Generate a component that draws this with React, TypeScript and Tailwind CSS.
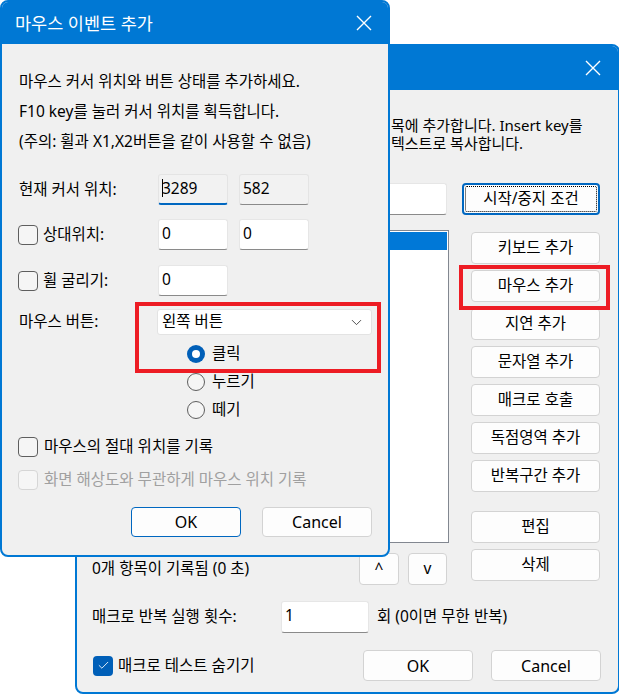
import { Check, ChevronDown } from 'lucide-react';
import clsx from 'clsx';

function CloseIcon() {
  return (
    <svg width="16" height="16" viewBox="0 0 16 16" fill="none">
      <path d="M1 1L15 15M15 1L1 15" stroke="white" strokeWidth="1.4" />
    </svg>
  );
}

function Btn({
  children,
  className,
  primary,
  focused,
}: {
  children: React.ReactNode;
  className?: string;
  primary?: boolean;
  focused?: boolean;
}) {
  return (
    <div
      className={clsx(
        'relative flex shrink-0 items-center justify-center rounded-[4px] bg-[#fdfdfd] text-[15.5px] text-black',
        focused ? 'border-2 border-[#0067c0]' : primary ? 'border border-[#0067c0]' : 'border border-[#d3d3d3]',
        className
      )}
    >
      {focused && <div className="absolute inset-[1px] rounded-[2px] border border-dotted border-black" />}
      {children}
    </div>
  );
}

function Box({ checked, disabled }: { checked?: boolean; disabled?: boolean }) {
  if (checked)
    return (
      <span className="flex h-[20px] w-[20px] shrink-0 items-center justify-center rounded-[4px] bg-[#005fb8]">
        <Check size={13} strokeWidth={1.6} color="white" />
      </span>
    );
  return (
    <span
      className={clsx(
        'h-[20px] w-[20px] shrink-0 rounded-[4px] border',
        disabled ? 'border-[#d6d6d6] bg-[#f6f6f6]' : 'border-[#5e5e5e] bg-[#f5f5f5]'
      )}
    />
  );
}

function Radio({ checked }: { checked?: boolean }) {
  if (checked)
    return (
      <span className="flex h-[18px] w-[18px] shrink-0 items-center justify-center rounded-full bg-[#005fb8]">
        <span className="h-[8px] w-[8px] rounded-full bg-white" />
      </span>
    );
  return <span className="h-[18px] w-[18px] shrink-0 rounded-full border border-[#5e5e5e] bg-[#f5f5f5]" />;
}

function Field({
  value,
  className,
  readOnly,
  focused,
}: {
  value: string;
  className?: string;
  readOnly?: boolean;
  focused?: boolean;
}) {
  return (
    <div
      className={clsx(
        'flex h-full shrink-0 items-start rounded-[3px] border px-[3px] pt-[3px] text-[15.5px] leading-[20px] text-black',
        readOnly ? 'border-[#e4e4e4] bg-[#f2f2f2]' : 'border-[#e6e6e6] bg-white',
        focused ? 'border-b-2 border-b-[#0067c0]' : 'border-b-[#8a8a8a]',
        className
      )}
    >
      {focused && <span className="mt-[1px] mr-[-1px] h-[18px] w-px bg-black" />}
      {value}
    </div>
  );
}

const sideButtons = ['키보드 추가', '마우스 추가', '지연 추가', '문자열 추가', '매크로 호출', '독점영역 추가', '반복구간 추가'];

function MacroWindow() {
  return (
    <div className="absolute left-[75px] top-[44px] flex h-[650px] w-[545px] flex-col overflow-hidden rounded-[8px] border-2 border-[#0078d4] bg-[#f0f0f0]">
      <div className="flex h-[44px] shrink-0 items-center justify-end bg-[#0078d4] pr-[17px]">
        <CloseIcon />
      </div>
      <div className="flex flex-col pl-[15px] pr-[17px]">
        <div className="pt-[26px] pl-[299px] text-[15px] leading-[18px] whitespace-nowrap">
          <p>목에 추가합니다. Insert key를</p>
          <p>텍스트로 복사합니다.</p>
        </div>

        <div className="mt-[31px] flex h-[32px] items-center gap-[15px]">
          <Field value="" className="w-[355px]" />
          <Btn focused className="h-[32px] w-[138px]">시작/중지 조건</Btn>
        </div>

        <div className="mt-[15px] flex gap-[22px]">
          <div className="flex w-[357px] flex-col">
            <div className="h-[313px] border border-[#828790] bg-white p-px">
              <div className="h-[18px] bg-[#0078d7]" />
            </div>
            <div className="mt-[10px] flex h-[32px] items-center pr-[2px]">
              <span className="flex-1 text-[15.5px]">0개 항목이 기록됨 (0 초)</span>
              <Btn className="h-[32px] w-[40px]">^</Btn>
              <Btn className="ml-[9px] h-[32px] w-[39px]">v</Btn>
            </div>
          </div>
          <div className="mt-[2px] flex w-[129px] flex-col gap-[6px]">
            {sideButtons.map((label) => (
              <Btn key={label} className="h-[32px] w-full">
                {label}
              </Btn>
            ))}
            <Btn className="mt-[13px] h-[32px] w-full">편집</Btn>
            <Btn className="h-[32px] w-full">삭제</Btn>
          </div>
        </div>

        <div className="mt-[16px] flex h-[32px] items-center text-[15.5px]">
          <span className="w-[189px]">매크로 반복 실행 횟수:</span>
          <Field value="1" className="w-[88px]" />
          <span className="ml-[8px]">회 (0이면 무한 반복)</span>
        </div>

        <div className="mt-[17px] flex h-[31px] items-center">
          <span className="ml-px">
            <Box checked />
          </span>
          <span className="ml-[5px] flex-1 text-[15.5px]">매크로 테스트 숨기기</span>
          <Btn className="h-[31px] w-[110px] text-[16px]">OK</Btn>
          <Btn className="ml-[18px] h-[31px] w-[110px] text-[16px]">Cancel</Btn>
        </div>
      </div>

      <div className="absolute left-[382px] top-[219px] h-[45px] w-[151px] border-4 border-[#ed1c24]" />
    </div>
  );
}

function MouseEventWindow() {
  return (
    <div className="absolute left-0 top-0 z-10 flex h-[557px] w-[390px] flex-col overflow-hidden rounded-[8px] border-2 border-[#0078d4] bg-[#f0f0f0]">
      <div className="flex h-[42px] shrink-0 items-center justify-between bg-[#0078d4] pl-[13px] pr-[16px]">
        <span className="text-[17.5px] text-white">마우스 이벤트 추가</span>
        <CloseIcon />
      </div>
      <div className="flex flex-col pl-[16px] pr-[16px] text-[15.5px] text-black">
        <div className="pt-[22px] pl-[1px] leading-[30px]">
          <p>마우스 커서 위치와 버튼 상태를 추가하세요.</p>
          <p>F10 key를 눌러 커서 위치를 획득합니다.</p>
          <p>(주의: 휠과 X1,X2버튼을 같이 사용할 수 없음)</p>
        </div>

        <div className="mt-[18px] flex h-[31px] items-center">
          <span className="w-[140px] pl-[1px]">현재 커서 위치:</span>
          <Field value="3289" readOnly focused className="w-[70px]" />
          <Field value="582" readOnly className="ml-[11px] w-[70px]" />
        </div>

        <div className="mt-[14px] flex h-[31px] items-center">
          <span className="flex w-[140px] items-center gap-[5px]">
            <Box />
            상대위치:
          </span>
          <Field value="0" className="w-[70px]" />
          <Field value="0" className="ml-[11px] w-[70px]" />
        </div>

        <div className="mt-[15px] flex h-[31px] items-center">
          <span className="flex w-[140px] items-center gap-[5px]">
            <Box />
            휠 굴리기:
          </span>
          <Field value="0" className="w-[70px]" />
        </div>

        <div className="mt-[13px] flex h-[26px] items-center">
          <span className="w-[139px] pl-[1px]">마우스 버튼:</span>
          <div className="flex h-full w-[215px] items-center justify-between rounded-[3px] border border-[#e3e3e3] bg-white pl-[4px] pr-[6px]">
            <span>왼쪽 버튼</span>
            <ChevronDown size={17} strokeWidth={1.2} color="#333333" />
          </div>
        </div>

        <div className="mt-[5px] flex flex-col pl-[169px]">
          <label className="flex h-[28px] items-center gap-[7px]">
            <Radio checked />
            클릭
          </label>
          <label className="flex h-[28px] items-center gap-[7px]">
            <Radio />
            누르기
          </label>
          <label className="flex h-[28px] items-center gap-[7px]">
            <Radio />
            떼기
          </label>
        </div>

        <label className="mt-[9px] flex h-[28px] items-center gap-[6px]">
          <Box />
          마우스의 절대 위치를 기록
        </label>
        <label className="mt-[5px] flex h-[28px] items-center gap-[6px] text-[#a0a0a0]">
          <Box disabled />
          화면 해상도와 무관하게 마우스 위치 기록
        </label>

        <div className="mt-[13px] flex h-[30px] justify-end gap-[21px]">
          <Btn primary className="h-[30px] w-[110px] text-[16px]">OK</Btn>
          <Btn className="h-[30px] w-[110px] text-[16px]">Cancel</Btn>
        </div>
      </div>

      <div className="absolute left-[133px] top-[300px] h-[71px] w-[246px] border-4 border-[#ed1c24]" />
    </div>
  );
}

export default function App() {
  return (
    <div className="relative h-[695px] w-[619px] overflow-hidden bg-white font-['Noto_Sans','Noto_Sans_CJK_KR',sans-serif] text-black">
      <MacroWindow />
      <MouseEventWindow />
    </div>
  );
}
